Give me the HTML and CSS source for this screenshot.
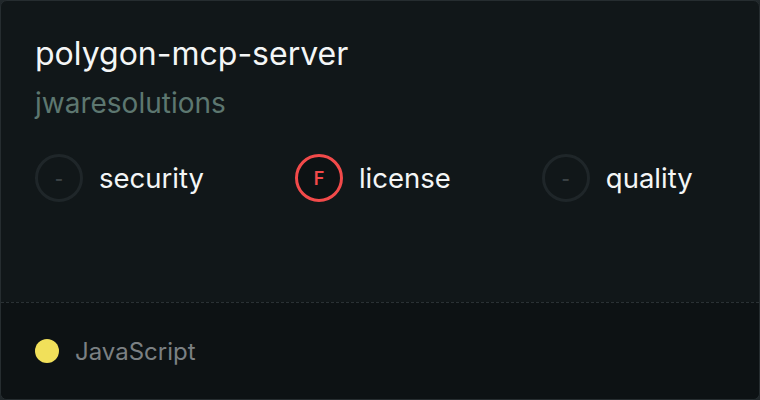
FILE: index.html
```html
<!DOCTYPE html>
<html>
<head>
<meta charset="utf-8">
<link rel="stylesheet" href="styles.css">
</head>
<body>
<div class="card">
  <div class="top">
    <div class="title">polygon-mcp-server</div>
    <div class="owner">jwaresolutions</div>
    <div class="scores">
      <div class="score">
        <div class="ring">-</div>
        <span class="label">security</span>
      </div>
      <div class="score">
        <div class="ring fail">F</div>
        <span class="label">license</span>
      </div>
      <div class="score">
        <div class="ring">-</div>
        <span class="label">quality</span>
      </div>
    </div>
  </div>
  <div class="bottom">
    <span class="dot"></span>
    <span class="lang">JavaScript</span>
  </div>
</div>
</body>
</html>
```

FILE: styles.css
```css
html, body {
  margin: 0;
  padding: 0;
  background: #21282b;
}
body {
  width: 760px;
  height: 400px;
  font-family: Inter, "Noto Sans", sans-serif;
}
.card {
  box-sizing: border-box;
  width: 760px;
  height: 400px;
  border: 1px solid #262d30;
  border-radius: 7px;
  background: #111719;
  overflow: hidden;
  display: flex;
  flex-direction: column;
}
.top {
  flex: 1;
  padding: 34px 34px 0 34px;
}
.title {
  color: #f4f6f6;
  font-size: 32px;
  line-height: 38px;
}
.owner {
  color: #5d7770;
  font-size: 28px;
  line-height: 34px;
  margin-top: 13px;
}
.scores {
  display: flex;
  gap: 91px;
  margin-top: 34px;
}
.score {
  display: flex;
  align-items: center;
  gap: 16px;
}
.ring {
  box-sizing: border-box;
  width: 48px;
  height: 48px;
  border-radius: 50%;
  border: 3px solid #1f2629;
  display: flex;
  align-items: center;
  justify-content: center;
  color: #3b4245;
  font-size: 18px;
  font-weight: 600;
}
.ring.fail {
  border-color: #f24a4a;
  color: #f24a4a;
  background: #0d1214;
}
.label {
  color: #f4f6f6;
  font-size: 27.5px;
}
.bottom {
  height: 96px;
  border-top: 1px dashed #2a3134;
  background: #0d1214;
  display: flex;
  align-items: center;
  padding-left: 34px;
  gap: 16px;
}
.dot {
  width: 24px;
  height: 24px;
  border-radius: 50%;
  background: #f1e05a;
}
.lang {
  color: #7b8083;
  font-size: 24px;
}
```
